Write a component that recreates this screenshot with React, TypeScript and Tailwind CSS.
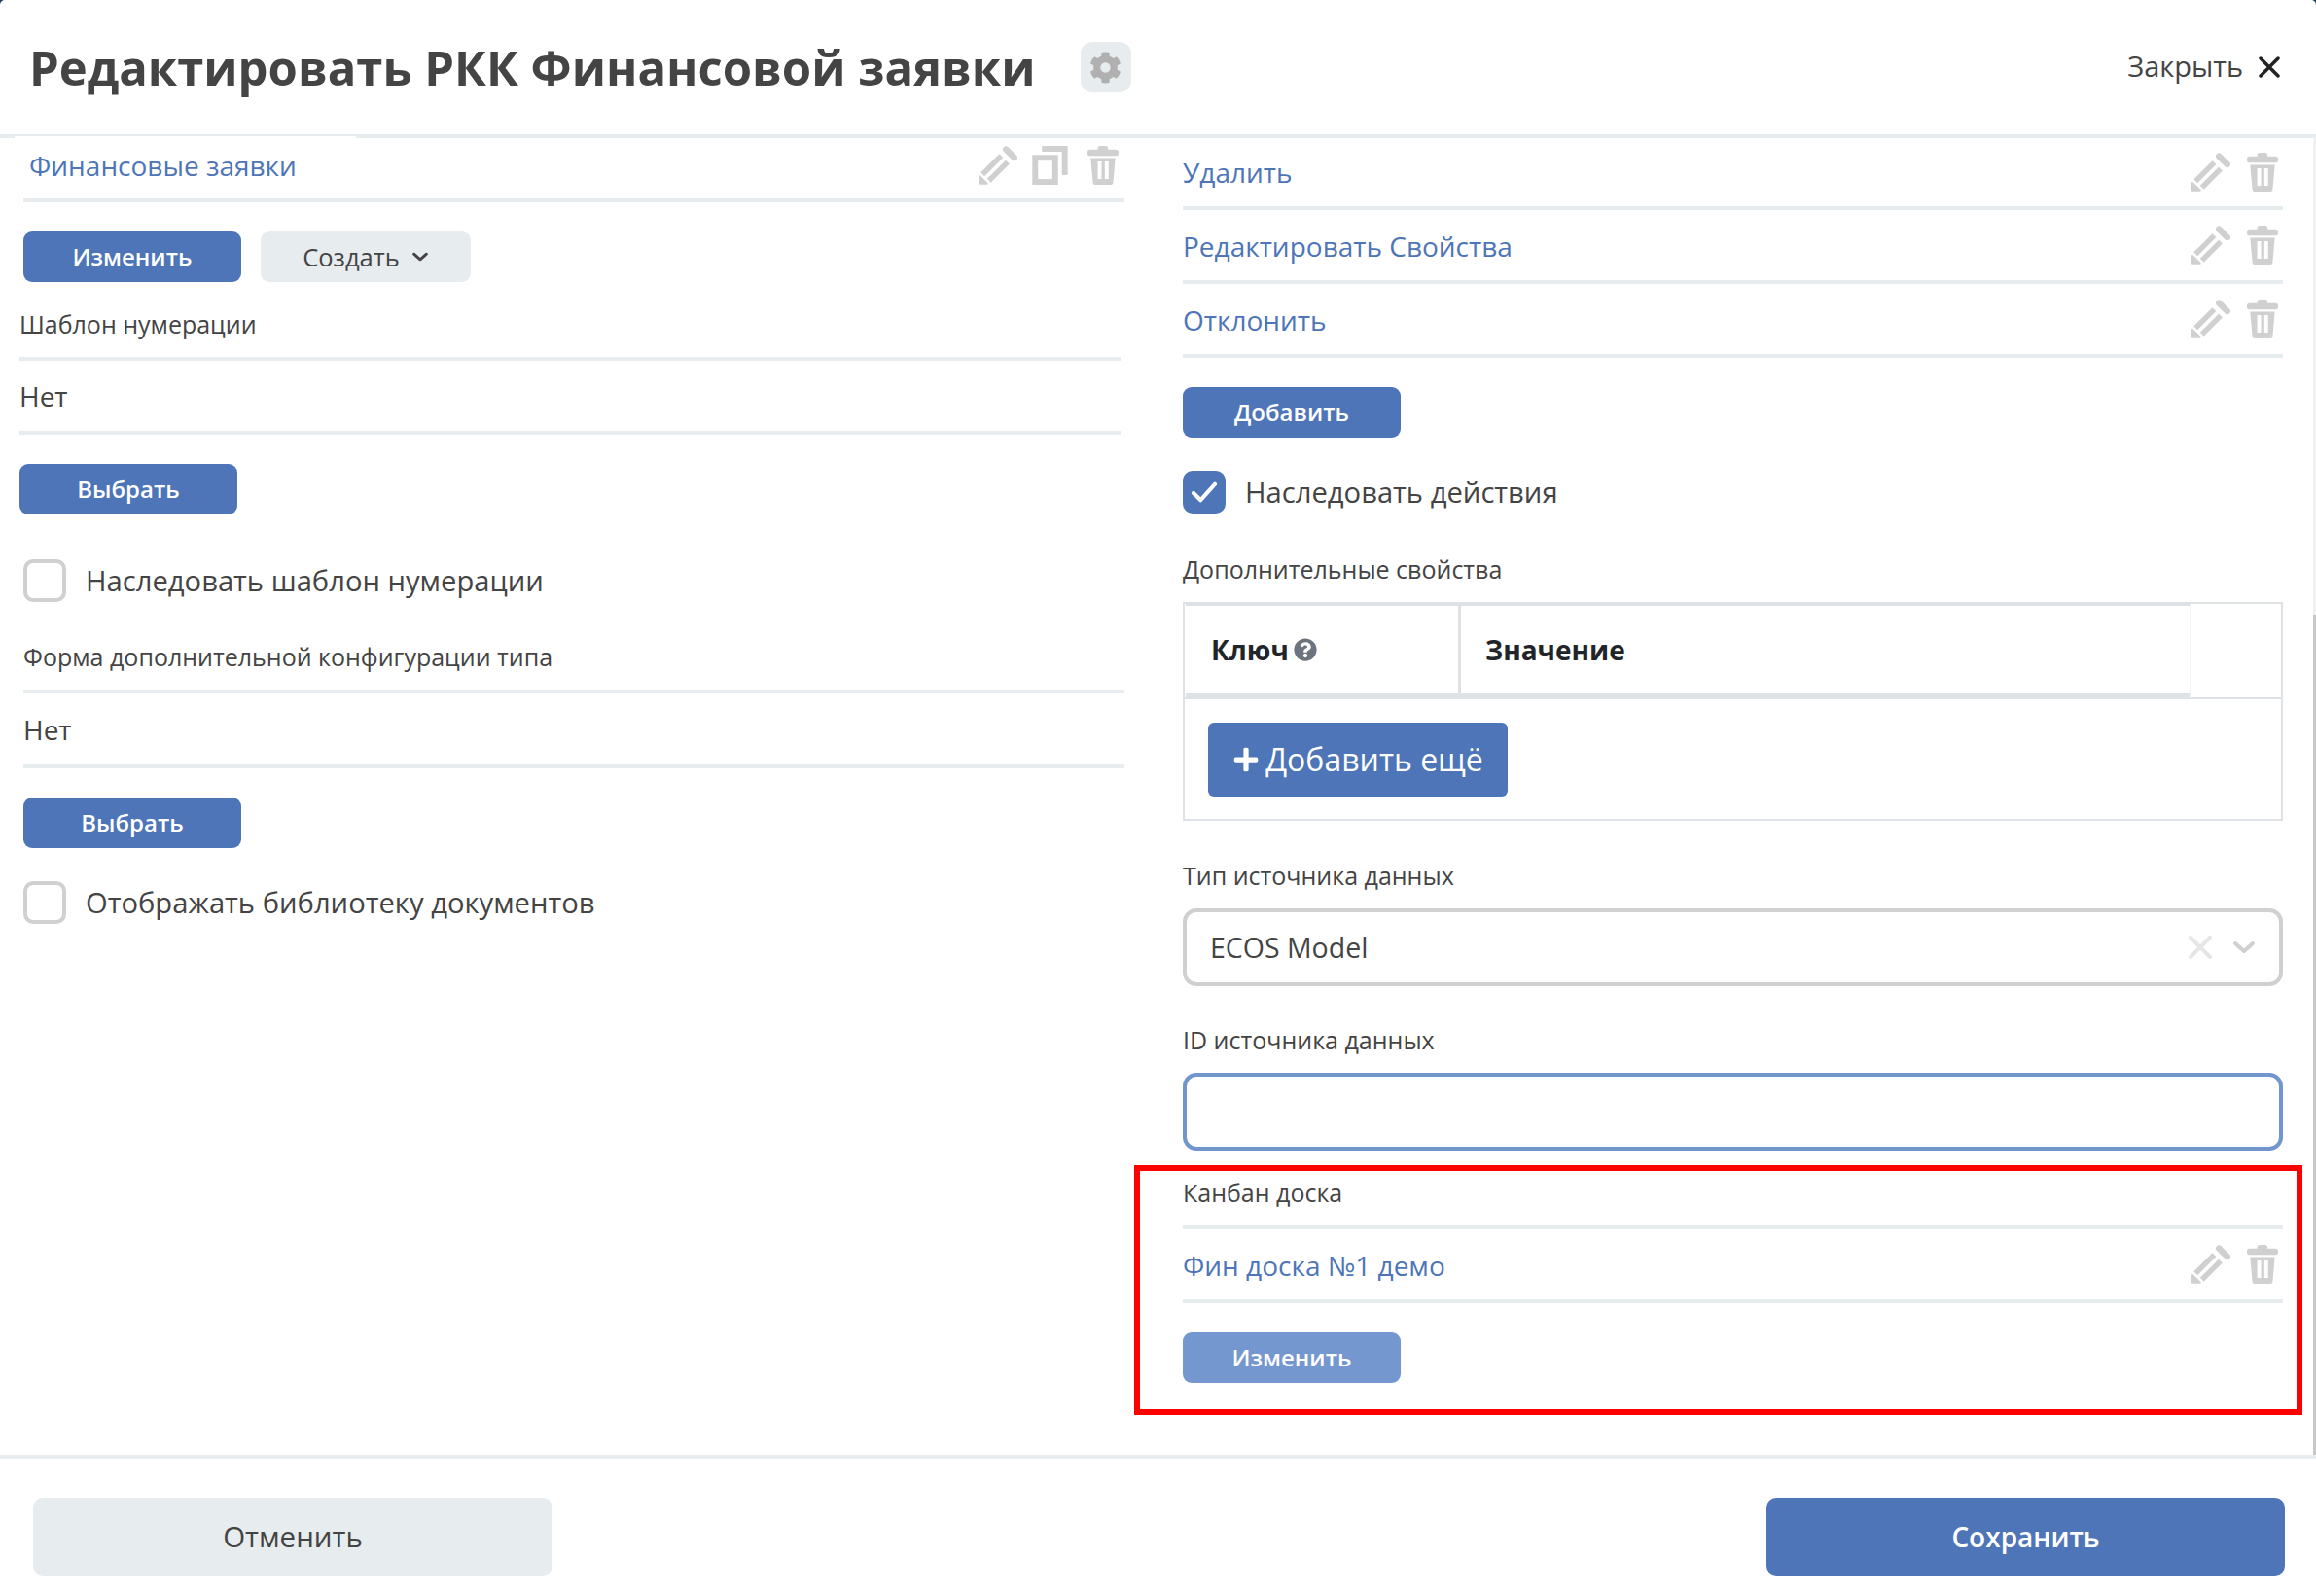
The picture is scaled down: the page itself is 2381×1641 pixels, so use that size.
import { FaCog, FaQuestionCircle, FaPlus } from "react-icons/fa";

function PencilIcon() {
  return (
    <svg viewBox="0 0 123 121" className="h-[40px] w-[40px] fill-[#d0d0d0] stroke-[#d0d0d0]" strokeLinecap="round">
      <path d="M3 94 L27 118 L3 118 Z" strokeWidth="6" strokeLinejoin="round" />
      <path d="M13 89 L72 30" strokeWidth="17" strokeLinecap="butt" />
      <path d="M33 109 L92 50" strokeWidth="17" strokeLinecap="butt" />
      <path d="M87 10 L113 36" strokeWidth="20" />
    </svg>
  );
}

function CopyIcon() {
  return (
    <svg viewBox="0 0 110 121" className="-ml-[2px] mr-[3px] h-[40px] w-[37px] fill-none stroke-[#d0d0d0]" strokeWidth="18">
      <rect x="9" y="37" width="62" height="75" />
      <path d="M30 9 H101 V91" />
    </svg>
  );
}

function TrashIcon() {
  return (
    <svg viewBox="0 0 97 121" className="h-[40px] w-[32px] fill-[#d0d0d0]">
      <rect x="32" y="0" width="32" height="20" rx="8" />
      <rect x="0" y="11" width="97" height="20" rx="8" />
      <path fillRule="evenodd" d="M10 38 H87 L80 115 Q79 121 73 121 H24 Q18 121 17 115 Z M32 48 V103 H44 V48 Z M54 48 V103 H66 V48 Z" />
    </svg>
  );
}

function Chevron({ className }: { className: string }) {
  return (
    <svg viewBox="0 0 24 14" className={className} fill="none" stroke="currentColor" strokeLinecap="round" strokeLinejoin="round">
      <path d="M3 3 L12 11 L21 3" />
    </svg>
  );
}

function BlueBtn({ label, className = "bg-[#4d75b8]" }: { label: string; className?: string }) {
  return (
    <button className={`flex h-[52px] w-[224px] items-center justify-center rounded-[9px] text-[24px] font-semibold text-white ${className}`}>
      {label}
    </button>
  );
}

function FieldTitle({ text, className = "" }: { text: string; className?: string }) {
  return (
    <div className={`border-b-4 border-[#e7ecef] text-[25px] leading-[34px] text-[#444] ${className}`}>{text}</div>
  );
}

function ValueRow({ text, h = "h-[76px]" }: { text: string; h?: string }) {
  return (
    <div className={`flex ${h} items-center border-b-4 border-[#e7ecef] text-[28px] text-[#444]`}>{text}</div>
  );
}

function LinkRow({
  text,
  h = "h-[76px]",
  textClass = "pt-[1px]",
  iconsClass = "pr-[5px]",
  copy = false,
}: {
  text: string;
  h?: string;
  textClass?: string;
  iconsClass?: string;
  copy?: boolean;
}) {
  return (
    <div className={`flex ${h} items-center justify-between border-b-4 border-[#e7ecef] text-[28px] text-[#4d75b8]`}>
      <span className={textClass}>{text}</span>
      <div className={`flex items-center gap-[17px] ${iconsClass}`}>
        <PencilIcon />
        {copy && <CopyIcon />}
        <TrashIcon />
      </div>
    </div>
  );
}

function CheckRow({ label, checked = false, className = "" }: { label: string; checked?: boolean; className?: string }) {
  return (
    <label className={`flex h-[44px] items-center gap-[20px] text-[29.2px] text-[#444] ${className}`}>
      {checked ? (
        <span className="flex h-[44px] w-[44px] items-center justify-center rounded-[10px] bg-[#4d75b8]">
          <svg viewBox="0 0 30 24" className="h-[22px] w-[30px] fill-none stroke-white" strokeWidth="4.5" strokeLinecap="round" strokeLinejoin="round">
            <path d="M3 13 L11 21 L27 3" />
          </svg>
        </span>
      ) : (
        <span className="h-[44px] w-[44px] rounded-[10px] border-4 border-[#d0d0d0] bg-white" />
      )}
      <span className="pt-[2px]">{label}</span>
    </label>
  );
}

export default function App() {
  return (
    <div className="relative h-[1641px] w-[2381px] overflow-hidden bg-[#1f3a5c] [font-family:'Open_Sans',sans-serif]">
      <div className="flex h-full flex-col rounded-t-[5px] bg-white">
        {/* Header */}
        <header className="flex h-[142px] shrink-0 items-center justify-between border-b-4 border-[#e7ecef] pl-[30px] pr-[37px]">
          <div className="flex items-center gap-[46px]">
            <h1 className="text-[49px] font-bold leading-none text-[#444]">Редактировать РКК Финансовой заявки</h1>
            <div className="flex h-[52px] w-[52px] items-center justify-center rounded-[12px] bg-[#e7ecef]">
              <FaCog className="h-[33px] w-[33px] text-[#b0b0b0]" />
            </div>
          </div>
          <div className="flex items-center gap-[16px] text-[29px] text-[#444]">
            <span className="pb-[3px]">Закрыть</span>
            <svg viewBox="0 0 22 22" className="h-[22px] w-[22px] stroke-[#222]" strokeWidth="3.5" strokeLinecap="round">
              <path d="M2 2 L20 20 M20 2 L2 20" />
            </svg>
          </div>
        </header>

        {/* Body */}
        <div className="flex min-h-0 flex-1">
          <section className="ml-[24px] w-[1132px]">
            <LinkRow text="Финансовые заявки" h="h-[66px]" textClass="pb-[6px] pl-[6px]" iconsClass="pb-[7px] pr-[6px]" copy />
            <div className="mt-[30px] flex gap-[20px]">
              <BlueBtn label="Изменить" />
              <button className="flex h-[52px] w-[216px] items-center justify-center gap-[12px] rounded-[9px] bg-[#e7ecef] text-[25.5px] text-[#444]">
                Создать
                <Chevron className="h-[10px] w-[18px] stroke-[4px] text-[#444]" />
              </button>
            </div>

            <div className="-ml-[4px] w-[1132px]">
              <FieldTitle text="Шаблон нумерации" className="mt-[26px] pb-[17px]" />
              <ValueRow text="Нет" />
              <BlueBtn label="Выбрать" className="mt-[30px] bg-[#4d75b8]" />
            </div>
            <CheckRow label="Наследовать шаблон нумерации" className="mt-[46px]" />

            <FieldTitle text="Форма дополнительной конфигурации типа" className="mt-[39px] pb-[17px]" />
            <ValueRow text="Нет" h="h-[77px]" />
            <BlueBtn label="Выбрать" className="mt-[30px] bg-[#4d75b8]" />
            <CheckRow label="Отображать библиотеку документов" className="mt-[34px]" />
          </section>

          <section className="ml-[60px] w-[1131px]">
            <LinkRow text="Удалить" h="h-[74px]" textClass="" />
            <LinkRow text="Редактировать Свойства" />
            <LinkRow text="Отклонить" />
            <BlueBtn label="Добавить" className="mt-[30px] bg-[#4d75b8]" />
            <CheckRow label="Наследовать действия" checked className="mt-[34px]" />

            <div className="mt-[40px] text-[25px] leading-[34px] text-[#444]">Дополнительные свойства</div>
            <div className="mt-[17px] border-2 border-[#dee2e6]">
              <div className="flex h-[98px] border-b-2 border-[#dee2e6] text-[28px] font-bold text-[#212529]">
                <div className="ml-[1px] flex w-[280px] items-center gap-[5px] border-b-4 border-t-2 border-[#dee2e6] pl-[26px]">
                  Ключ
                  <FaQuestionCircle className="h-[24px] w-[24px] text-[#6c757d]" />
                </div>
                <div className="flex w-[752px] items-center border-b-4 border-l-[3px] border-t-2 border-[#dee2e6] pl-[25px]">Значение</div>
                <div className="flex-1 border-l-2 border-[#f1f3f5]" />
              </div>
              <div className="px-[24px] pb-[23px] pt-[24px]">
                <button className="flex h-[76px] w-[308px] items-center justify-center gap-[6px] rounded-[6px] bg-[#4d75b8] text-[32px] text-white">
                  <FaPlus className="h-[28px] w-[28px]" />
                  Добавить ещё
                </button>
              </div>
            </div>

            <div className="mt-[39px] text-[25px] leading-[34px] text-[#444]">Тип источника данных</div>
            <div className="mt-[17px] flex h-[80px] items-center justify-between rounded-[14px] border-4 border-[#d0d0d0] pl-[24px] pr-[24px] text-[28.5px] text-[#444]">
              ECOS Model
              <div className="flex items-center gap-[21px]">
                <svg viewBox="0 0 24 24" className="h-[24px] w-[24px] stroke-[#e6e6e6]" strokeWidth="4" strokeLinecap="round">
                  <path d="M2 2 L22 22 M22 2 L2 22" />
                </svg>
                <Chevron className="h-[14px] w-[24px] stroke-[4px] text-[#d0d0d0]" />
              </div>
            </div>

            <div className="mt-[38px] text-[25px] leading-[34px] text-[#444]">ID источника данных</div>
            <div className="mt-[17px] h-[80px] rounded-[14px] border-4 border-[#7195cc]" />

            <FieldTitle text="Канбан доска" className="mt-[26px] pb-[17px]" />
            <LinkRow text="Фин доска №1 демо" />
            <BlueBtn label="Изменить" className="mt-[30px] bg-[#7597cf]" />
          </section>
        </div>

        {/* Footer */}
        <footer className="flex h-[145px] shrink-0 items-start justify-between border-t-4 border-[#e7ecef] pl-[34px] pr-[32px] pt-[40px]">
          <button className="flex h-[80px] w-[534px] items-center justify-center rounded-[10px] bg-[#e7ecef] text-[29.5px] font-medium text-[#444]">Отменить</button>
          <button className="flex h-[80px] w-[533px] items-center justify-center rounded-[10px] bg-[#4d75b8] text-[28px] font-semibold text-white">Сохранить</button>
        </footer>
      </div>

      {/* tab edge, scrollbar and the annotation frame sit on top of the form */}
      <div className="absolute left-[15px] top-[140px] h-[2px] w-[351px] bg-white" />
      <div className="absolute right-0 top-[142px] h-[490px] w-[3px] bg-[#f1f1f1]" />
      <div className="absolute right-0 top-[632px] h-[864px] w-[3px] bg-[#c8c8c8]" />
      <div className="absolute left-[1166px] top-[1198px] h-[257px] w-[1201px] border-[6px] border-[#ff0000]" />
    </div>
  );
}
